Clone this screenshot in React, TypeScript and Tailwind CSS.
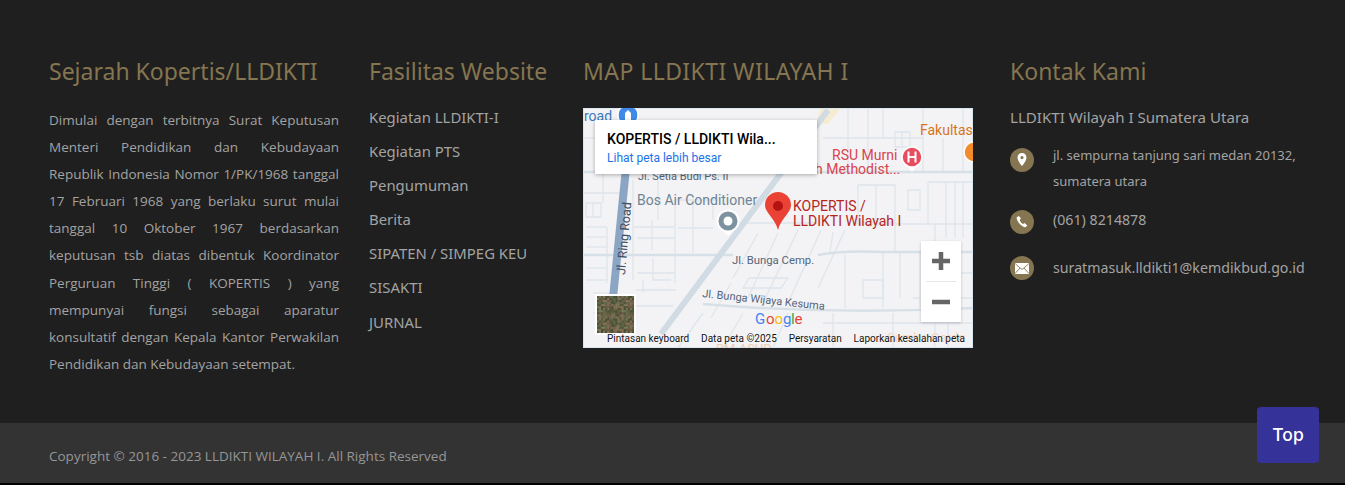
import React from "react";

const thin = [
  "M3 95H18V109H3Z","M10 95V109","M3 119H24","M3 129H24","M3 139H24","M24 119V175","M3 160H24","M3 172H24","M50 72V172","M92 92V175","M69 112V142",
  "M50 119H92","M53 182H93","M53 198H90","M70 150V172H88","M60 172V185","M75 72V112","M0 85H40","M20 65V95","M92 92H135","M95 120H130","M110 92V145","M130 95V112",
  "M54 130H92","M54 165H92","M10 185H28","M10 205H28","M0 30H12",
  "M175 125L150 170","M195 125L165 190","M215 122L180 195","M238 122L205 195","M262 122L235 180","M166 170H205L198 180H160Z","M148 175L128 210","M120 205L95 240","M160 205L140 240","M205 205L190 240",
  "M160 115H235","M270 116H390","M275 77H312V114H275Z","M293 77V114","M325 82H337V102H325Z","M363 74V130","M372 74V130","M380 74V130","M345 74H390","M345 74V115","M352 116V144","M312 114V144",
  "M337 144V200","M317 144V190","M280 172H300V190H280Z","M250 124L247 144","M262 147V200","M300 144V200","M365 144V240","M352 144V240","M310 205V240","M240 215H390","M250 205V240","M330 190H390","M345 165H390",
  "M312 24H327V39H312Z","M319 24V39","M285 0V64","M300 0V30","M340 0V64","M360 30V64","M380 0V64","M265 0V64","M240 30H340",
];
const thick = ["M0 147H150","M235 147Q260 142 300 144H390","M120 196Q250 207 390 200","M0 64H390"];
const sat = ["#5d5a3e", "#77664a", "#4d5638", "#8a7557", "#66644a", "#534b35", "#7b7a5c", "#6e5a42", "#45503a", "#80705a", "#5a6a48"];

function MapArt() {
  return (
    <svg viewBox="0 0 390 240" className="block h-full w-full" fill="none">
      <rect width="390" height="240" fill="#f3f3f5" />
      <path d="M238 0H258L245 16H232Z" fill="#f6ecd2" />
      {thin.map((d) => (
        <path key={d} d={d} stroke="#dee5eb" strokeWidth="1.3" />
      ))}
      {thick.map((d) => (
        <path key={d} d={d} stroke="#d8e0e7" strokeWidth="2.500" />
      ))}
      <path d="M245 2L78 226" stroke="#d0dbe3" strokeWidth="6" />
      <path d="M43 60L30 190" stroke="#8ba5c4" strokeWidth="8" />
      <rect x="0.5" y="0.5" width="389" height="239" stroke="#d7e6ef" />
      <g fontFamily="Roboto, sans-serif">
        <text x="304" y="234" fill="#f3d6c0" fontSize="13">Sumba Garde</text>
        <text x="133" y="245" fill="#f0cbb0" fontSize="13">BM ASUD</text>
        <text x="1" y="13" fill="#3d78bd" fontSize="14">road</text>
        <text x="337" y="27" fill="#d9731a" fontSize="14">Fakultas</text>
        <text x="249" y="52" fill="#d9434e" fontSize="14">RSU Murni</text>
        <text x="232" y="66" fill="#d9434e" fontSize="14">h Methodist...</text>
        <text x="54" y="97" fill="#6f8494" fontSize="14">Bos Air Conditioner</text>
        <text x="210" y="103" fill="#b3261e" fontSize="14">KOPERTIS /</text>
        <text x="210" y="118" fill="#b3261e" fontSize="14">LLDIKTI Wilayah I</text>
        <text x="55" y="72" fill="#55657a" fontSize="11">Jl. Setia Budi Ps. II</text>
        <text x="149" y="156" fill="#55657a" fontSize="11.300">Jl. Bunga Cemp.</text>
        <text transform="translate(119 189) rotate(6)" fill="#55657a" fontSize="11">Jl. Bunga Wijaya Kesuma</text>
        <text transform="translate(42 167) rotate(-85)" fill="#3f4f63" fontSize="12.500">Jl. Ring Road</text>
      </g>
      <rect x="35" y="-2" width="20" height="18" rx="8" fill="#3f8ae8" stroke="#fff" strokeWidth="1.5" />
      <path d="M45 2l3 3v7h-6V5z" fill="#fff" />
      <circle cx="329" cy="49" r="10" fill="#ea4c5f" stroke="#fff" strokeWidth="1.5" />
      <path d="M329 64l-4-5h8z" fill="#fff" />
      <path d="M324.500 43.500h2v4.500h5v-4.500h2v11h-2v-4.500h-5v4.500h-2z" fill="#fff" />
      <circle cx="391" cy="44" r="10" fill="#f28b2b" stroke="#fff" strokeWidth="1.5" />
      <path d="M145 128l-6-6h12z" fill="#fff" />
      <circle cx="145" cy="113" r="10.500" fill="#7d929f" stroke="#fff" strokeWidth="2" />
      <circle cx="145" cy="113" r="4.500" fill="#fff" />
      <path d="M195 122C192 110 182 105 182 97a13 13 0 0 1 26 0C208 105 198 110 195 122Z" fill="#ea4335" />
      <circle cx="195" cy="98" r="5" fill="#b31412" />
      <rect x="12" y="186" width="41" height="41" rx="1" fill="#fff" />
      <rect x="14" y="188" width="37" height="37" fill="#5f6146" />
      {Array.from({ length: 324 }, (_, i) => (
        <rect key={i} x={14 + (i % 18) * 2.055} y={188 + Math.floor(i / 18) * 2.055} width="2.100" height="2.100" fill={sat[(i * i * 13 + i * 7 + Math.floor(i / 18) * 5) % 11]} />
      ))}
      <g fontFamily="Roboto, sans-serif" fontSize="15">
        <text x="172" y="216" fill="#4285f4">G</text>
        <text x="183" y="216" fill="#ea4335">o</text>
        <text x="191.500" y="216" fill="#fbbc05">o</text>
        <text x="200" y="216" fill="#4285f4">g</text>
        <text x="208" y="216" fill="#34a853">l</text>
        <text x="211.500" y="216" fill="#ea4335">e</text>
      </g>
    </svg>
  );
}

function GoogleMap() {
  return (
    <div className="relative h-[240px] w-[390px] overflow-hidden font-['Roboto',sans-serif]">
      <MapArt />
      <div className="absolute left-[12px] top-[12px] flex h-[54px] w-[222px] flex-col bg-white pl-[12px] pt-[9px] shadow-[0_1px_4px_rgba(0,0,0,0.3)]">
        <span className="text-[14px] font-medium leading-[20px] text-black">KOPERTIS / LLDIKTI Wila...</span>
        <span className="mt-[1px] text-[12px] leading-[16px] text-[#1a73e8]">Lihat peta lebih besar</span>
      </div>
      <div className="absolute right-[12px] top-[133px] flex h-[81px] w-[40px] flex-col items-center bg-white shadow-[0_1px_3px_rgba(0,0,0,0.2)]">
        <svg width="40" height="40" viewBox="0 0 40 40"><path d="M11 20h18M20 11v18" stroke="#666" strokeWidth="4.500" /></svg>
        <div className="h-px w-[30px] bg-[#e6e6e6]" />
        <svg width="40" height="40" viewBox="0 0 40 40"><path d="M11 20h18" stroke="#666" strokeWidth="4.500" /></svg>
      </div>
      <div className="absolute bottom-[3px] left-[24px] right-[8px] flex h-[14px] items-center justify-between text-[10px] text-[#111] [text-shadow:0_0_2px_#fff]">
        <span>Pintasan keyboard</span>
        <span>Data peta ©2025</span>
        <span>Persyaratan</span>
        <span>Laporkan kesalahan peta</span>
      </div>
    </div>
  );
}

function Heading({ children, wide }: { children: React.ReactNode; wide?: boolean }) {
  return (
    <h3 className={wide ? "mb-[24px] whitespace-nowrap font-['Noto_Sans',sans-serif] text-[23px] font-normal leading-[30px] tracking-[0.43px] text-[#857550]" : "mb-[24px] whitespace-nowrap font-['Noto_Sans',sans-serif] text-[23px] font-normal leading-[30px] text-[#857550]"}>
      {children}
    </h3>
  );
}

const links = ["Kegiatan LLDIKTI-I", "Kegiatan PTS", "Pengumuman", "Berita", "SIPATEN / SIMPEG KEU", "SISAKTI", "JURNAL"];

function Badge({ children }: { children: React.ReactNode }) {
  return <span className="flex h-[24px] w-[24px] shrink-0 items-center justify-center rounded-full bg-[#857550]">{children}</span>;
}

export default function App() {
  return (
    <footer className="relative h-[485px] w-full overflow-hidden bg-black font-['Open_Sans',sans-serif]">
      <div className="flex h-[423px] bg-[#1f1f1f] pl-[49px] pt-[56px]">
        <div className="mr-[30px] w-[290px]">
          <Heading>Sejarah Kopertis/LLDIKTI</Heading>
          <p className="mt-[-3px] text-justify text-[13.5px] leading-[27.1px] text-[#a3a3a3]">
            Dimulai dengan terbitnya Surat Keputusan Menteri Pendidikan dan Kebudayaan Republik Indonesia Nomor 1/PK/1968 tanggal 17 Februari 1968 yang berlaku surut mulai tanggal 10 Oktober 1967 berdasarkan keputusan tsb diatas dibentuk Koordinator Perguruan Tinggi ( KOPERTIS ) yang mempunyai fungsi sebagai aparatur konsultatif dengan Kepala Kantor Perwakilan Pendidikan dan Kebudayaan setempat.
          </p>
        </div>
        <div className="w-[214px]">
          <Heading>Fasilitas Website</Heading>
          <ul className="mt-[-5px] flex flex-col gap-[10.1px] font-['Noto_Sans',sans-serif]">
            {links.map((l) => (
              <li key={l} className="text-[14.9px] leading-[24px] text-[#a3a3a3]">{l}</li>
            ))}
          </ul>
        </div>
        <div className="w-[427px]">
          <Heading wide>MAP LLDIKTI WILAYAH I</Heading>
          <div className="mt-[-2px]"><GoogleMap /></div>
        </div>
        <div className="w-[320px] font-['Noto_Sans',sans-serif]">
          <Heading>Kontak Kami</Heading>
          <div className="mt-[-5px] text-[15.1px] leading-[24px] text-[#a3a3a3]">LLDIKTI Wilayah I Sumatera Utara</div>
          <div className="mt-[13px] flex gap-[19px]">
            <div className="mt-[6px]"><Badge><svg width="12" height="14" viewBox="0 0 12 14"><path fillRule="evenodd" d="M6 0a4.500 4.500 0 0 0-4.500 4.500C1.500 8 6 13 6 13s4.500-5 4.500-8.500A4.500 4.500 0 0 0 6 0Zm0 3a1.600 1.600 0 1 1 0 3.200A1.600 1.600 0 0 1 6 3Z" fill="#fff" /></svg></Badge></div>
            <div className="text-[13px] leading-[26px] text-[#a3a3a3]">jl. sempurna tanjung sari medan 20132,<br />sumatera utara</div>
          </div>
          <div className="mt-[13px] flex gap-[19px]">
            <div className="mt-[3px]"><Badge><svg width="14" height="14" viewBox="0 0 24 24"><path d="M6.600 1.500 3 4c-1 6 8 17 15 17l3-3-4.500-4.500-2.700 1.800C11 14 8.500 10.500 8 8l2.300-2z" fill="#fff" /></svg></Badge></div>
            <div className="text-[14.2px] leading-[26px] text-[#a3a3a3]">(061) 8214878</div>
          </div>
          <div className="mt-[21px] flex gap-[19px]">
            <div className="mt-[1px]"><Badge><svg width="14" height="11" viewBox="0 0 14 11"><rect width="14" height="11" rx="1" fill="#fff" /><path d="M0.500 1 7 6.500 13.500 1M0.500 10 5 5M13.500 10 9 5" stroke="#857550" strokeWidth="0.900" fill="none" /></svg></Badge></div>
            <div className="text-[14.2px] leading-[26px] text-[#a3a3a3]">suratmasuk.lldikti1@kemdikbud.go.id</div>
          </div>
        </div>
      </div>
      <div className="flex h-[60px] items-center bg-[#333333] pl-[49px] pt-[6px] text-[13.5px] text-[#969696]">
        Copyright © 2016 - 2023 LLDIKTI WILAYAH I. All Rights Reserved
      </div>
      <div className="absolute left-[1257px] top-[407px] flex h-[56px] w-[62px] items-center justify-center rounded-[4px] bg-[#35339a] font-['Inter',sans-serif] text-[17.5px] font-medium text-white">Top</div>
    </footer>
  );
}
